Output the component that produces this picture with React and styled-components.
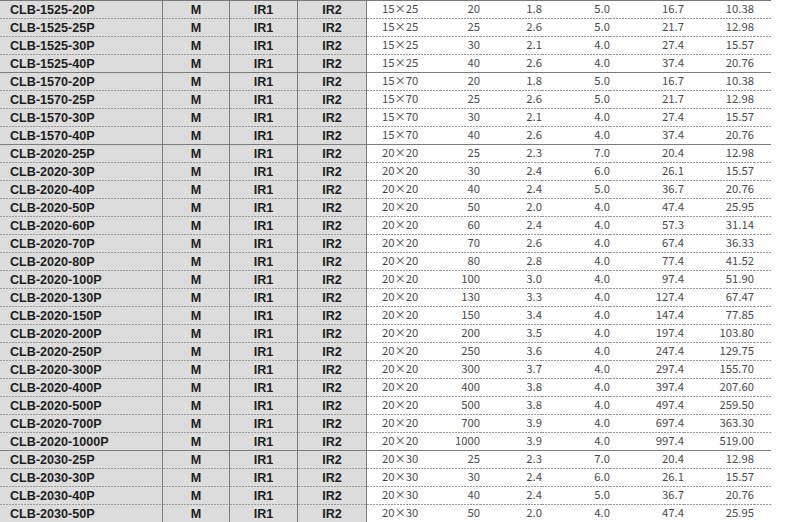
import React from 'react';
import styled, { createGlobalStyle } from 'styled-components';

const GlobalStyle = createGlobalStyle`
  html, body {
    margin: 0;
    padding: 0;
    background: #fff;
  }
`;

const Table = styled.div`
  width: 771px;
  border-top: 1px solid #7a7a7a;
  display: flex;
  flex-direction: column;
`;

const Row = styled.div`
  display: grid;
  grid-template-columns: 163px 67px 68px 69px 73px 40px 62px 68px 74px 70px 17px;
  height: 18px;
  box-sizing: border-box;
`;

const Cell = styled.div`
  box-sizing: border-box;
  height: 18px;
  display: flex;
  align-items: center;
  justify-content: ${({ $align }) =>
    $align === 'right' ? 'flex-end' : $align === 'left' ? 'flex-start' : 'center'};
  padding-left: ${({ $pl }) => $pl || 0}px;
  background: ${({ $end }) =>
      $end
        ? 'linear-gradient(#7d7d7d, #7d7d7d) left bottom / 100% 1px no-repeat'
        : 'linear-gradient(to right, #9a9a9a 55%, transparent 55%) left bottom / 3px 1px repeat-x'},
    ${({ $gray }) => ($gray ? '#dcdcdc' : '#fff')};
  border-right: ${({ $line }) => ($line ? '1px solid #7c7c7c' : 'none')};
  white-space: nowrap;
`;

const Bold = styled.span`
  font-family: 'Liberation Sans', Arial, sans-serif;
  font-weight: 700;
  font-size: 12.6px;
  color: #1e1e1e;
  line-height: 1;
  padding-top: 1px;
`;

const Num = styled.span`
  display: block;
  font-family: 'Noto Sans CJK JP', 'Noto Sans', sans-serif;
  font-weight: 400;
  font-size: 11.3px;
  color: #4a4a4a;
  line-height: 11px;
  margin-top: -3px;
`;

const groups = [
  {
    series: '1525',
    dim: '15×25',
    rows: [
      ['20', '1.8', '5.0', '16.7', '10.38'],
      ['25', '2.6', '5.0', '21.7', '12.98'],
      ['30', '2.1', '4.0', '27.4', '15.57'],
      ['40', '2.6', '4.0', '37.4', '20.76'],
    ],
  },
  {
    series: '1570',
    dim: '15×70',
    rows: [
      ['20', '1.8', '5.0', '16.7', '10.38'],
      ['25', '2.6', '5.0', '21.7', '12.98'],
      ['30', '2.1', '4.0', '27.4', '15.57'],
      ['40', '2.6', '4.0', '37.4', '20.76'],
    ],
  },
  {
    series: '2020',
    dim: '20×20',
    rows: [
      ['25', '2.3', '7.0', '20.4', '12.98'],
      ['30', '2.4', '6.0', '26.1', '15.57'],
      ['40', '2.4', '5.0', '36.7', '20.76'],
      ['50', '2.0', '4.0', '47.4', '25.95'],
      ['60', '2.4', '4.0', '57.3', '31.14'],
      ['70', '2.6', '4.0', '67.4', '36.33'],
      ['80', '2.8', '4.0', '77.4', '41.52'],
      ['100', '3.0', '4.0', '97.4', '51.90'],
      ['130', '3.3', '4.0', '127.4', '67.47'],
      ['150', '3.4', '4.0', '147.4', '77.85'],
      ['200', '3.5', '4.0', '197.4', '103.80'],
      ['250', '3.6', '4.0', '247.4', '129.75'],
      ['300', '3.7', '4.0', '297.4', '155.70'],
      ['400', '3.8', '4.0', '397.4', '207.60'],
      ['500', '3.8', '4.0', '497.4', '259.50'],
      ['700', '3.9', '4.0', '697.4', '363.30'],
      ['1000', '3.9', '4.0', '997.4', '519.00'],
    ],
  },
  {
    series: '2030',
    dim: '20×30',
    rows: [
      ['25', '2.3', '7.0', '20.4', '12.98'],
      ['30', '2.4', '6.0', '26.1', '15.57'],
      ['40', '2.4', '5.0', '36.7', '20.76'],
      ['50', '2.0', '4.0', '47.4', '25.95'],
    ],
  },
];

const App = () => (
  <>
    <GlobalStyle />
    <Table>
      {groups.map((g, gi) =>
        g.rows.map(([len, a, b, c, d], i) => {
          const end = i === g.rows.length - 1 && gi < groups.length - 1;
          return (
            <Row key={`${g.series}-${len}`}>
              <Cell $gray $line $end={end} $align="left" $pl={10}>
                <Bold>{`CLB-${g.series}-${len}P`}</Bold>
              </Cell>
              <Cell $gray $line $end={end}>
                <Bold>M</Bold>
              </Cell>
              <Cell $gray $line $end={end}>
                <Bold>IR1</Bold>
              </Cell>
              <Cell $gray $line $end={end}>
                <Bold>IR2</Bold>
              </Cell>
              <Cell $end={end} $align="left" $pl={15}>
                <Num>{g.dim}</Num>
              </Cell>
              <Cell $end={end} $align="right">
                <Num>{len}</Num>
              </Cell>
              <Cell $end={end} $align="right">
                <Num>{a}</Num>
              </Cell>
              <Cell $end={end} $align="right">
                <Num>{b}</Num>
              </Cell>
              <Cell $end={end} $align="right">
                <Num>{c}</Num>
              </Cell>
              <Cell $end={end} $align="right">
                <Num>{d}</Num>
              </Cell>
              <Cell $end={end} />
            </Row>
          );
        })
      )}
    </Table>
  </>
);

export default App;
